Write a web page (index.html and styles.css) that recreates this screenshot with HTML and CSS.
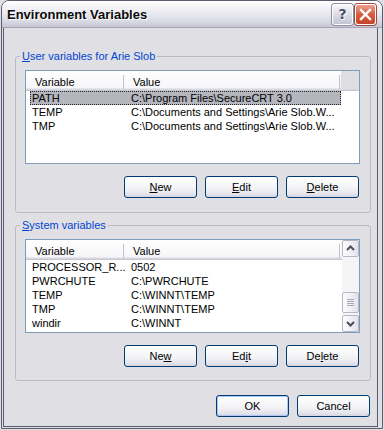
FILE: index.html
```html
<!DOCTYPE html>
<html lang="en">
<head>
    <meta charset="UTF-8">
    <meta name="viewport" content="width=device-width, initial-scale=1.0">
    <title>Environment Variables</title>
    <link rel="stylesheet" href="styles.css">
</head>
<body>
    <div class="window">
        <div class="titlebar">
            <span class="title">Environment Variables</span>
            <button class="cap-btn help">?</button>
            <button class="cap-btn close">
                <svg width="19" height="19" viewBox="0 0 19 19">
                    <path d="M5 5 L14 14 M14 5 L5 14" stroke="#fff" stroke-width="2.4" stroke-linecap="square"/>
                </svg>
            </button>
        </div>

        <div class="client">
            <!-- User variables -->
            <fieldset class="group group-user">
                <legend><u>U</u>ser variables for Arie Slob</legend>
                <div class="listview">
                    <div class="lv-main">
                        <div class="lv-header">
                            <span class="hd-cell hd-name">Variable</span>
                            <span class="hd-sep"></span>
                            <span class="hd-cell hd-value">Value</span>
                            <span class="hd-sep"></span>
                            <span class="hd-filler"></span>
                        </div>
                        <div class="lv-row selected">
                            <span class="cell-name">PATH</span>
                            <span class="cell-value">C:\Program Files\SecureCRT 3.0</span>
                        </div>
                        <div class="lv-row">
                            <span class="cell-name">TEMP</span>
                            <span class="cell-value">C:\Documents and Settings\Arie Slob.W...</span>
                        </div>
                        <div class="lv-row">
                            <span class="cell-name">TMP</span>
                            <span class="cell-value">C:\Documents and Settings\Arie Slob.W...</span>
                        </div>
                    </div>
                </div>
                <div class="btn-row">
                    <button class="btn"><u>N</u>ew</button>
                    <button class="btn"><u>E</u>dit</button>
                    <button class="btn"><u>D</u>elete</button>
                </div>
            </fieldset>

            <!-- System variables -->
            <fieldset class="group group-system">
                <legend><u>S</u>ystem variables</legend>
                <div class="listview">
                    <div class="lv-main">
                        <div class="lv-header">
                            <span class="hd-cell hd-name">Variable</span>
                            <span class="hd-sep"></span>
                            <span class="hd-cell hd-value">Value</span>
                            <span class="hd-sep"></span>
                            <span class="hd-rest"></span>
                        </div>
                        <div class="lv-row">
                            <span class="cell-name">PROCESSOR_R...</span>
                            <span class="cell-value">0502</span>
                        </div>
                        <div class="lv-row">
                            <span class="cell-name">PWRCHUTE</span>
                            <span class="cell-value">C:\PWRCHUTE</span>
                        </div>
                        <div class="lv-row">
                            <span class="cell-name">TEMP</span>
                            <span class="cell-value">C:\WINNT\TEMP</span>
                        </div>
                        <div class="lv-row">
                            <span class="cell-name">TMP</span>
                            <span class="cell-value">C:\WINNT\TEMP</span>
                        </div>
                        <div class="lv-row">
                            <span class="cell-name">windir</span>
                            <span class="cell-value">C:\WINNT</span>
                        </div>
                    </div>
                    <div class="scrollbar">
                        <div class="sb-btn">
                            <svg width="15" height="15" viewBox="0 0 15 15"><polyline points="4,9 7.5,5.5 11,9" fill="none" stroke="#4d4d60" stroke-width="2"/></svg>
                        </div>
                        <div class="sb-thumb">
                            <svg width="15" height="19" viewBox="0 0 15 19">
                                <path d="M4 6.5 H11 M4 8.5 H11 M4 10.5 H11 M4 12.5 H11" stroke="#a8a8b8" stroke-width="1"/>
                            </svg>
                        </div>
                        <div class="sb-btn sb-down">
                            <svg width="15" height="15" viewBox="0 0 15 15"><polyline points="4,6 7.5,9.5 11,6" fill="none" stroke="#4d4d60" stroke-width="2"/></svg>
                        </div>
                    </div>
                </div>
                <div class="btn-row">
                    <button class="btn">Ne<u>w</u></button>
                    <button class="btn">Ed<u>i</u>t</button>
                    <button class="btn">De<u>l</u>ete</button>
                </div>
            </fieldset>

            <div class="dialog-buttons">
                <button class="btn default">OK</button>
                <button class="btn">Cancel</button>
            </div>
        </div>
    </div>
</body>
</html>
```

FILE: styles.css
```css
body {
    margin: 0;
    background: #e0dfe3;
    font-family: "Liberation Sans", Arial, sans-serif;
    font-size: 11px;
    color: #000;
}

.window {
    margin-left: 1px;
    width: 382px;
    height: 429px;
    box-sizing: border-box;
    border: 1px solid #5c5c70;
    border-radius: 8px 8px 0 0;
    background: #e0dfe3;
    display: flex;
    flex-direction: column;
    overflow: hidden;
}

/* Title bar */
.titlebar {
    height: 27px;
    box-sizing: border-box;
    border-bottom: 1px solid #a4a4b6;
    display: flex;
    align-items: center;
    gap: 2px;
    padding: 0 6px 0 5px;
    background: linear-gradient(to bottom, #ffffff 0%, #f3f3f7 25%, #e6e6ee 55%, #d8d8e2 80%, #c6c6d4 100%);
}

.title {
    flex: 1;
    font-size: 13px;
    font-weight: bold;
    color: #0a0a0a;
    text-shadow: 1px 1px 0 #ffffff;
}

.cap-btn {
    width: 21px;
    height: 21px;
    padding: 0;
    box-sizing: border-box;
    border: 1px solid #ffffff;
    border-radius: 3px;
    display: flex;
    align-items: center;
    justify-content: center;
    box-shadow: 0 0 0 1px #8e8ea4;
}

.help {
    background: linear-gradient(to bottom, #f6f6fa, #c4c4d6);
    color: #4d4d66;
    font-family: "DejaVu Sans", sans-serif;
    font-size: 14px;
    font-weight: bold;
    text-shadow: 1px 1px 0 #ffffff;
}

.close {
    background: linear-gradient(to bottom, #eca08c, #d85c40 50%, #c4462a);
    box-shadow: 0 0 0 1px #a04a3c;
}

/* Client area */
.client {
    flex: 1;
    margin: 0 4px 1px 1px;
    border: 1px solid #5c5c70;
    border-top: none;
    padding: 22px 7px 0 11px;
}

.group {
    width: 356px;
    box-sizing: border-box;
    margin: 0;
    padding: 7px 10px 14px 9px;
    border: 1px solid #bcbac4;
    border-radius: 3px;
    min-inline-size: 0;
}

.group-system {
    margin-top: 6px;
    padding-bottom: 13px;
}

.group legend {
    margin-left: -5px;
    padding: 0 2px;
    line-height: 13px;
    color: #0046d5;
}

/* List view */
.listview {
    width: 335px;
    height: 94px;
    box-sizing: border-box;
    border: 1px solid #7f9db9;
    background: #ffffff;
    display: flex;
}

.lv-main {
    flex: 1;
    overflow: hidden;
}

.lv-header {
    height: 20px;
    box-sizing: border-box;
    padding-top: 1px;
    display: flex;
    align-items: center;
    background: linear-gradient(to bottom, #fefefe, #f5f5f8);
    box-shadow: inset 0 -1px #c6c6d2, inset 0 -2px #d8d8e2, inset 0 -3px #e6e6ec;
}

.hd-cell {
    box-sizing: border-box;
    padding-left: 9px;
    white-space: nowrap;
}

.hd-name {
    width: 97px;
}

.hd-value {
    width: 215px;
}

.hd-sep {
    width: 1px;
    height: 14px;
    background: #c2c2ce;
}

.hd-filler {
    flex: 1;
    align-self: stretch;
    margin: -1px 0 2px 1px;
    background: #dfdfe3;
}

.hd-rest {
    flex: 1;
}

.lv-row {
    display: flex;
    width: 311px;
    height: 14px;
    line-height: 14px;
    margin-left: 4px;
    white-space: nowrap;
}

.lv-row.selected {
    background: #b5b5be;
    outline: 1px dotted #222;
    outline-offset: -1px;
}

.cell-name {
    width: 94px;
    box-sizing: border-box;
    padding-left: 2px;
}

.cell-value {
    padding-left: 7px;
}

/* Scrollbar */
.scrollbar {
    width: 17px;
    display: flex;
    flex-direction: column;
    background: #f5f5f8;
}

.sb-btn,
.sb-thumb {
    box-sizing: border-box;
    border: 1px solid #b6b6c6;
    border-radius: 2px;
    background: linear-gradient(to right, #fdfdfe, #e2e2ea);
    display: flex;
    align-items: center;
    justify-content: center;
}

.sb-btn {
    height: 17px;
}

.sb-thumb {
    height: 21px;
    margin-top: 35px;
}

.sb-down {
    margin-top: auto;
}

/* Buttons */
.btn-row,
.dialog-buttons {
    display: flex;
    justify-content: flex-end;
    gap: 8px;
}

.btn-row {
    margin-top: 12px;
    padding-right: 1px;
}

.dialog-buttons {
    margin-top: 14px;
}

.btn {
    width: 73px;
    height: 22px;
    padding: 0;
    box-sizing: border-box;
    border: 1px solid #003c74;
    border-radius: 3px;
    background: linear-gradient(to bottom, #ffffff 0%, #f4f4f7 55%, #e4e4ec 85%, #d4d4e0 100%);
    font-family: "Liberation Sans", Arial, sans-serif;
    font-size: 11px;
    color: #000;
}

.btn.default {
    box-shadow: inset 0 0 0 1px #b0c6f2;
}
```
